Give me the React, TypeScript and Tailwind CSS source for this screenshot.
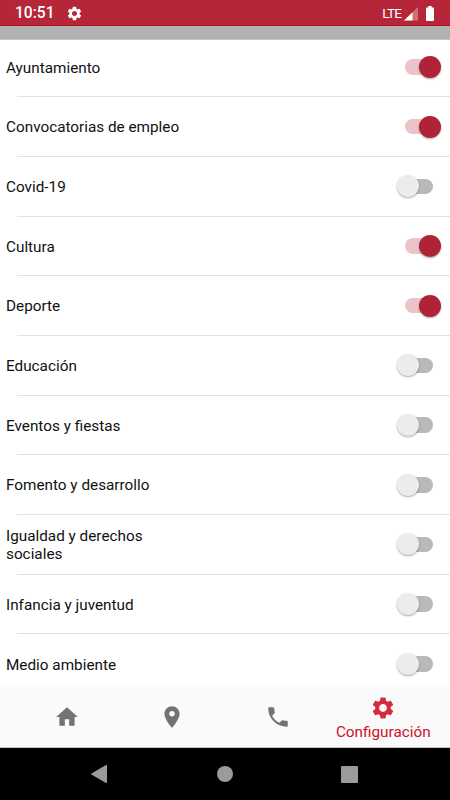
import { useState } from 'react'
import { MdHome, MdPlace, MdPhone, MdSettings } from 'react-icons/md'
import clsx from 'clsx'

interface Category {
  id: string
  label: string
  enabled: boolean
}

const initialCategories: Category[] = [
  { id: 'ayuntamiento', label: 'Ayuntamiento', enabled: true },
  { id: 'empleo', label: 'Convocatorias de empleo', enabled: true },
  { id: 'covid', label: 'Covid-19', enabled: false },
  { id: 'cultura', label: 'Cultura', enabled: true },
  { id: 'deporte', label: 'Deporte', enabled: true },
  { id: 'educacion', label: 'Educación', enabled: false },
  { id: 'eventos', label: 'Eventos y fiestas', enabled: false },
  { id: 'fomento', label: 'Fomento y desarrollo', enabled: false },
  { id: 'igualdad', label: 'Igualdad y derechos sociales', enabled: false },
  { id: 'infancia', label: 'Infancia y juventud', enabled: false },
  { id: 'medio', label: 'Medio ambiente', enabled: false }
]

const tabs = [
  { id: 'home', label: 'Inicio', icon: MdHome },
  { id: 'places', label: 'Lugares', icon: MdPlace },
  { id: 'phones', label: 'Teléfonos', icon: MdPhone },
  { id: 'settings', label: 'Configuración', icon: MdSettings }
]

function StatusBar() {
  return (
    <div className="flex h-[26px] shrink-0 items-center border-b border-[#b5091f] bg-[#b42638] text-white">
      <span className="ml-[15px] w-[52px] pt-[3px] text-[15.6px] font-medium leading-none">10:51</span>
      <MdSettings className="-ml-[1.5px] mt-px h-[17px] w-[17px]" />
      <span className="ml-auto pt-[2px] text-[13.6px] leading-none tracking-[-0.9px]">LTE</span>
      {/* Signal */}
      <svg className="ml-[3px] mt-[2px] h-[14px] w-[14px]" viewBox="0 0 14 14">
        <path d="M14 0V13.5H0Z" fill="#fff" fillOpacity="0.35" />
        <path d="M8.5 5.3V13.5H0Z" fill="#fff" />
      </svg>
      {/* Battery */}
      <svg className="ml-2 mr-4 mt-[2px] h-[15px] w-[8px]" viewBox="0 0 8 15">
        <path d="M2.3 0H5.7V1.4H7.3Q8 1.4 8 2.1V14.3Q8 15 7.3 15H0.7Q0 15 0 14.3V2.1Q0 1.4 0.7 1.4H2.3Z" fill="#fff" />
      </svg>
    </div>
  )
}

interface SwitchProps {
  label: string
  checked: boolean
  onChange: () => void
}

function Switch({ label, checked, onChange }: SwitchProps) {
  return (
    <button
      role="switch"
      aria-label={label}
      aria-checked={checked}
      onClick={onChange}
      className="relative flex h-[22px] w-[44px] items-center px-2"
    >
      <span className={clsx('h-[15.5px] w-full rounded-full', checked ? 'bg-[#ebc3c9]' : 'bg-[#b9b9b9]')} />
      <span
        className={clsx(
          'absolute top-0 h-[22px] w-[22px] rounded-full shadow-[0_1px_2px_rgba(0,0,0,0.35)]',
          checked ? 'right-0 bg-[#b02336]' : 'left-0 bg-[#ececec]'
        )}
      />
    </button>
  )
}

export default function App() {
  const [categories, setCategories] = useState(initialCategories)
  const [activeTab, setActiveTab] = useState('settings')

  const toggleCategory = (id: string) => {
    setCategories(prev => prev.map(c => (c.id === id ? { ...c, enabled: !c.enabled } : c)))
  }

  return (
    <div className="flex h-[800px] w-[450px] flex-col overflow-hidden bg-white font-['Roboto',sans-serif]">
      <StatusBar />
      <div className="h-[14px] shrink-0 border-b border-[#c4c4c4] bg-[#b1b1b1]" />

      {/* Categories */}
      <div className="min-h-0 flex-1 overflow-hidden">
        <ul className="-mt-[2.4px]">
          {categories.map(category => (
            <li key={category.id} className="flex h-[59.7px] flex-col">
              <div className="flex flex-1 items-center justify-between pl-1.5 pr-[9.5px]">
                <span className="max-w-[180px] pt-[3px] text-[15.3px] leading-[17.6px] text-[#111]">
                  {category.label}
                </span>
                <Switch
                  label={category.label}
                  checked={category.enabled}
                  onChange={() => toggleCategory(category.id)}
                />
              </div>
              <div className="ml-[17px] h-px bg-[#e1e1e1]" />
            </li>
          ))}
        </ul>
      </div>

      {/* Tabs */}
      <nav className="grid h-[63px] shrink-0 grid-cols-4 border-b border-[#c0c0c0] bg-[#fafafa] px-[14px]">
        {tabs.map(({ id, label, icon: Icon }) => (
          <button
            key={id}
            aria-label={label}
            onClick={() => setActiveTab(id)}
            className={clsx(
              'flex flex-col items-center',
              activeTab === id ? 'pt-[10px] text-[#d52b40]' : 'pt-[19px] text-[#737373]'
            )}
          >
            <Icon className="h-[26px] w-[26px] shrink-0" />
            {activeTab === id && (
              <span className="mt-[1.5px] text-[15.3px] leading-[18px] text-[#cb1327]">{label}</span>
            )}
          </button>
        ))}
      </nav>

      {/* Android navigation */}
      <div className="flex h-[52px] shrink-0 items-center justify-between bg-black pl-[91px] pr-[92px] text-[#9b9b9b]">
        <svg className="h-[18px] w-[16px]" viewBox="0 0 16 18" fill="currentColor">
          <path d="M0.4 8.5Q0 9 0.4 9.4L15 17.9Q16 18.2 16 17.2V0.8Q16 -0.2 15 0.1Z" />
        </svg>
        <span className="ml-px h-4 w-4 rounded-full bg-current" />
        <span className="h-[17px] w-[17px] rounded-[1px] bg-current" />
      </div>
    </div>
  )
}
